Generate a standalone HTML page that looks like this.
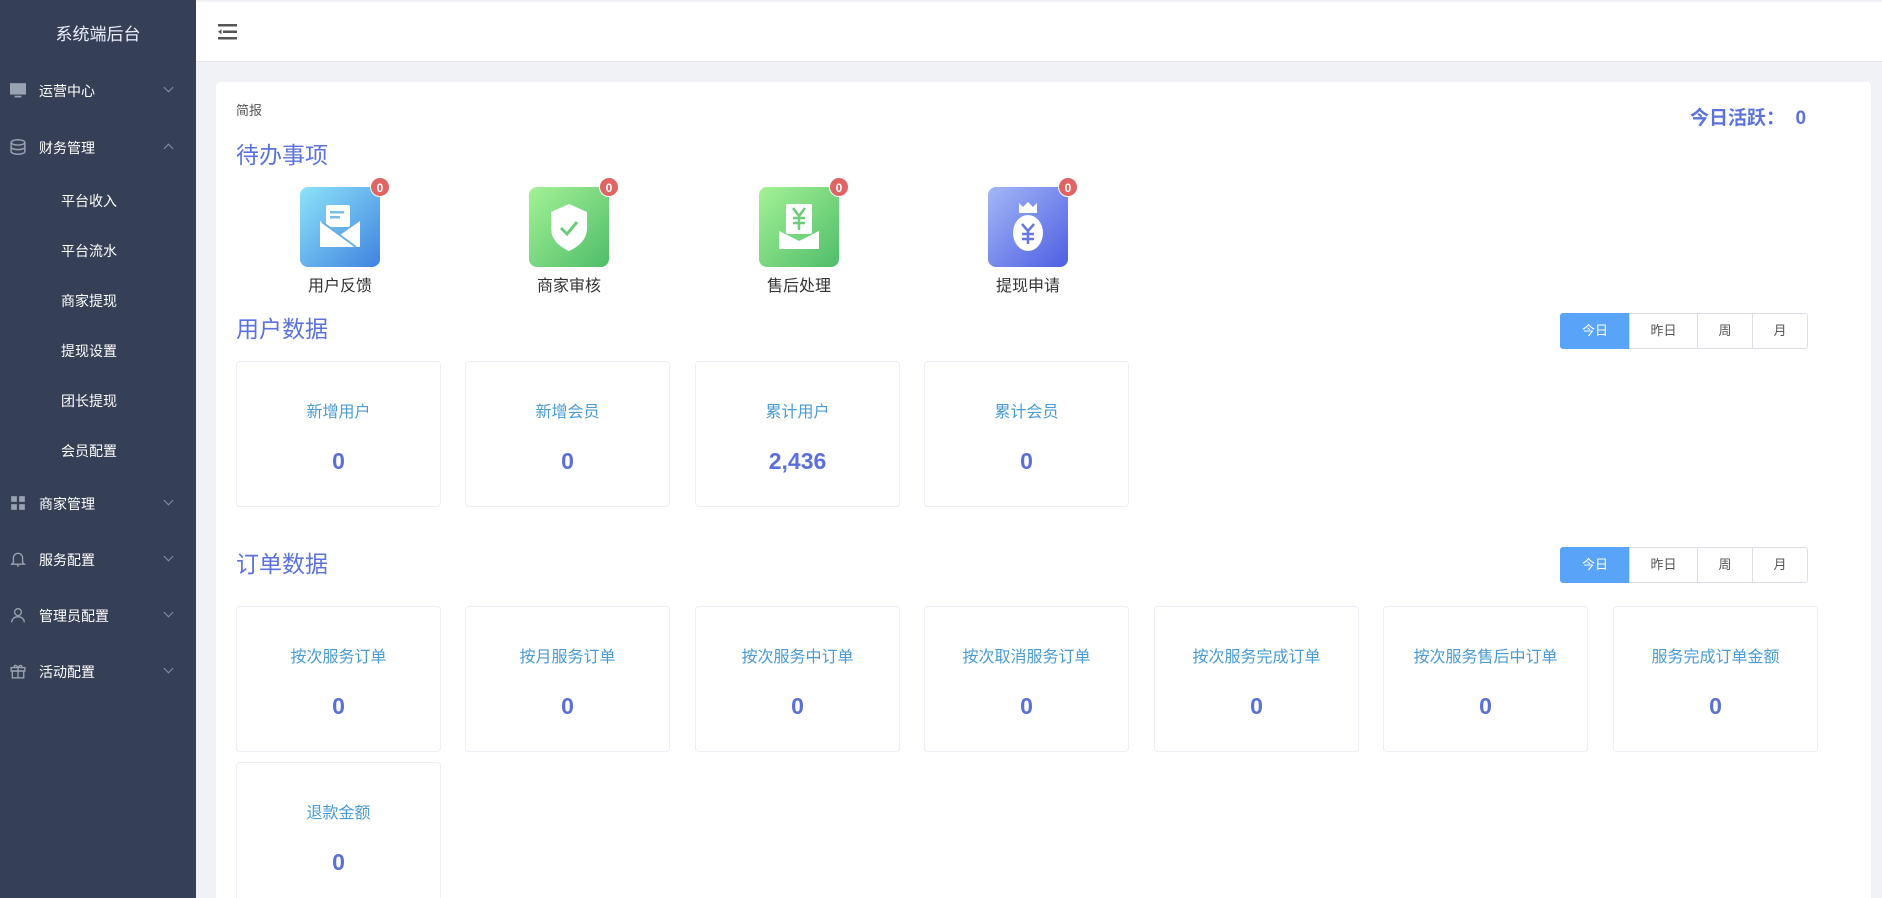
<!DOCTYPE html>
<html style="overflow:hidden;height:898px"><head><meta charset="utf-8"><style>
*{margin:0;padding:0;box-sizing:border-box}
body{width:1882px;height:898px;overflow:hidden;background:#f0f2f5;font-family:"Liberation Sans","Noto Sans CJK SC",sans-serif;position:relative}
.side{position:absolute;left:0;top:0;width:196px;height:898px;background:#353f55;color:#fff}
.logo{position:absolute;top:20px;width:196px;text-align:center;font-size:17px;color:#eef}
.mi{position:absolute;left:0;width:196px;font-size:14px;color:#fff}
.mi .ic{position:absolute;left:10px;top:-8px;width:16px;height:16px}
.mi .t{position:absolute;left:39px;top:-9px}
.mi .ar{position:absolute;left:165px;top:-6px;width:7px;height:7px;border-right:1px solid #8a93a6;border-bottom:1px solid #8a93a6;transform:rotate(45deg)}
.mi .ar.up{transform:rotate(-135deg);top:-2px}
.sub{position:absolute;left:61px;font-size:14px;color:#fff}
.hdr{position:absolute;left:196px;top:2px;right:0;height:60px;background:#fff;border-bottom:1px solid #e3e5e8}
.card{position:absolute;left:216px;top:82px;width:1655px;height:816px;background:#fff;border-radius:4px 4px 0 0}
.abs{position:absolute}
.ti{font-size:23px;color:#5b72dc}
.todo{position:absolute;width:80px;height:80px;border-radius:8px}
.badge{position:absolute;width:20px;height:20px;border-radius:10px;background:#e06464;color:#fff;font-size:12px;font-weight:bold;text-align:center;line-height:20px;border:1px solid #fff}
.tl{position:absolute;font-size:16px;color:#333;width:120px;text-align:center}
.btns{position:absolute;display:flex;height:36px}
.btns div{border:1px solid #dcdfe6;margin-left:-1px;font-size:13px;color:#555;text-align:center;line-height:34px;background:#fff}
.btns div.on{background:#59a3f8;border-color:#59a3f8;color:#fff;border-radius:3px 0 0 3px}
.btns div:last-child{border-radius:0 3px 3px 0}
.sc{position:absolute;width:205px;height:146px;border:1px solid #ebeef5;border-radius:4px;text-align:center}
.sc .l{position:absolute;top:36px;width:100%;font-size:16px;color:#4a9bd4}
.sc .v{position:absolute;top:86px;width:100%;font-size:23px;font-weight:bold;color:#5b6fd8}
</style></head><body>
<div class="side">
<div class="logo">系统端后台</div>
<div class="mi" style="top:90px"><svg class="ic" viewBox="0 0 14 14"><rect x="0" y="1" width="14" height="10" fill="#9aa1b0"/><rect x="4" y="12" width="6" height="1.5" fill="#9aa1b0"/></svg><span class="t">运营中心</span><span class="ar"></span></div>
<div class="mi" style="top:147px"><svg class="ic" viewBox="0 0 14 14" fill="none" stroke="#9aa1b0" stroke-width="1.3"><ellipse cx="7" cy="3" rx="6" ry="2.3"/><path d="M1 3v8c0 1.3 2.7 2.3 6 2.3s6-1 6-2.3V3M1 7c0 1.3 2.7 2.3 6 2.3S13 8.3 13 7"/></svg><span class="t">财务管理</span><span class="ar up"></span></div>
<div class="sub" style="top:191px">平台收入</div>
<div class="sub" style="top:241px">平台流水</div>
<div class="sub" style="top:291px">商家提现</div>
<div class="sub" style="top:341px">提现设置</div>
<div class="sub" style="top:391px">团长提现</div>
<div class="sub" style="top:441px">会员配置</div>
<div class="mi" style="top:503px"><svg class="ic" viewBox="0 0 14 14" fill="#9aa1b0"><rect x="1" y="1" width="5" height="5"/><rect x="8" y="1" width="5" height="5"/><rect x="1" y="8" width="5" height="5"/><rect x="8" y="8" width="5" height="5"/></svg><span class="t">商家管理</span><span class="ar"></span></div>
<div class="mi" style="top:559px"><svg class="ic" viewBox="0 0 14 14" fill="none" stroke="#9aa1b0" stroke-width="1.2"><path d="M3 10V6a4 4 0 0 1 8 0v4l1.5 1.5h-11zM6 13h2"/></svg><span class="t">服务配置</span><span class="ar"></span></div>
<div class="mi" style="top:615px"><svg class="ic" viewBox="0 0 14 14" fill="none" stroke="#9aa1b0" stroke-width="1.2"><circle cx="7" cy="4.5" r="3"/><path d="M1.5 13.5c0-3 2.5-5 5.5-5s5.5 2 5.5 5"/></svg><span class="t">管理员配置</span><span class="ar"></span></div>
<div class="mi" style="top:671px"><svg class="ic" viewBox="0 0 14 14" fill="none" stroke="#9aa1b0" stroke-width="1.2"><rect x="1" y="4" width="12" height="3"/><rect x="2" y="7" width="10" height="6"/><path d="M7 4v9M7 4C5 1 3 2 4 4M7 4c2-3 4-2 3 0"/></svg><span class="t">活动配置</span><span class="ar"></span></div>
</div>
<div class="hdr">
<svg style="position:absolute;left:22px;top:22px" width="19" height="16" viewBox="0 0 19 16" fill="#555"><rect x="0" y="0" width="19" height="2.5"/><rect x="5" y="6.5" width="14" height="2.5"/><rect x="0" y="13" width="19" height="2.5"/><path d="M0 7.8l3.5-2.5v5z"/></svg>
</div>
<div class="card">
<div class="abs" style="left:20px;top:18px;font-size:13px;color:#555">简报</div>
<div class="abs" style="left:1474px;top:21px;font-size:19px;font-weight:bold;color:#5b72dc">今日活跃：&nbsp;&nbsp;0</div>
<div class="abs ti" style="left:20px;top:54px">待办事项</div>

<div class="todo" style="left:84px;top:105px;background:linear-gradient(135deg,#8ee3f9,#3f83e0)"><svg width="80" height="80" viewBox="0 0 80 80"><rect x="26" y="18" width="24" height="22" rx="2" fill="#fff"/><rect x="30" y="24" width="14" height="2.5" fill="#7dbde9"/><rect x="30" y="29" width="10" height="2.5" fill="#7dbde9"/><path d="M20 34l20 14 20-14v26H20z" fill="#fff"/><path d="M22 35l34 25" stroke="#68aee6" stroke-width="2"/></svg></div>
<div class="badge" style="left:154px;top:95px">0</div>
<div class="tl" style="left:64px;top:190px">用户反馈</div>

<div class="todo" style="left:313px;top:105px;background:linear-gradient(135deg,#a4f295,#4fbd6a)"><svg width="80" height="80" viewBox="0 0 80 80"><path d="M40 17l18 8v16c0 12-9 19-18 23-9-4-18-11-18-23V25z" fill="#fff"/><path d="M32 41l6 6 10-12" stroke="#6ccc7a" stroke-width="3" fill="none"/></svg></div>
<div class="badge" style="left:383px;top:95px">0</div>
<div class="tl" style="left:293px;top:190px">商家审核</div>

<div class="todo" style="left:543px;top:105px;background:linear-gradient(135deg,#a4f295,#4fbd6a)"><svg width="80" height="80" viewBox="0 0 80 80"><rect x="27" y="17" width="26" height="30" rx="2" fill="#fff"/><path d="M34 21l6 8 6-8M40 29v14M34 31h12M34 36h12" stroke="#6ccc7a" stroke-width="2.5" fill="none"/><path d="M20 44l20 10 20-10v18H20z" fill="#fff"/></svg></div>
<div class="badge" style="left:613px;top:95px">0</div>
<div class="tl" style="left:523px;top:190px">售后处理</div>

<div class="todo" style="left:772px;top:105px;background:linear-gradient(135deg,#a3b7f5,#4e5ee3)"><svg width="80" height="80" viewBox="0 0 80 80"><path d="M31 16l4 4 5-5 5 5 4-4v10H31z" fill="#fff"/><ellipse cx="40" cy="46" rx="15" ry="18" fill="#fff"/><path d="M34 37l6 7 6-7M40 44v13M34 47h12M34 52h12" stroke="#6677e0" stroke-width="2.5" fill="none"/></svg></div>
<div class="badge" style="left:842px;top:95px">0</div>
<div class="tl" style="left:752px;top:190px">提现申请</div>

<div class="abs ti" style="left:20px;top:228px">用户数据</div>
<div class="btns" style="left:1345px;top:231px"><div class="on" style="width:70px">今日</div><div style="width:69px">昨日</div><div style="width:56px">周</div><div style="width:56px">月</div></div>
<div class="sc" style="left:20px;top:279px"><div class="l">新增用户</div><div class="v">0</div></div>
<div class="sc" style="left:249px;top:279px"><div class="l">新增会员</div><div class="v">0</div></div>
<div class="sc" style="left:479px;top:279px"><div class="l">累计用户</div><div class="v">2,436</div></div>
<div class="sc" style="left:708px;top:279px"><div class="l">累计会员</div><div class="v">0</div></div>

<div class="abs ti" style="left:20px;top:463px">订单数据</div>
<div class="btns" style="left:1345px;top:465px"><div class="on" style="width:70px">今日</div><div style="width:69px">昨日</div><div style="width:56px">周</div><div style="width:56px">月</div></div>
<div class="sc" style="left:20px;top:524px"><div class="l">按次服务订单</div><div class="v">0</div></div>
<div class="sc" style="left:249px;top:524px"><div class="l">按月服务订单</div><div class="v">0</div></div>
<div class="sc" style="left:479px;top:524px"><div class="l">按次服务中订单</div><div class="v">0</div></div>
<div class="sc" style="left:708px;top:524px"><div class="l">按次取消服务订单</div><div class="v">0</div></div>
<div class="sc" style="left:938px;top:524px"><div class="l">按次服务完成订单</div><div class="v">0</div></div>
<div class="sc" style="left:1167px;top:524px"><div class="l">按次服务售后中订单</div><div class="v">0</div></div>
<div class="sc" style="left:1397px;top:524px"><div class="l">服务完成订单金额</div><div class="v">0</div></div>
<div class="sc" style="left:20px;top:680px;height:140px"><div class="l">退款金额</div><div class="v">0</div></div>
</div>
</body></html>
